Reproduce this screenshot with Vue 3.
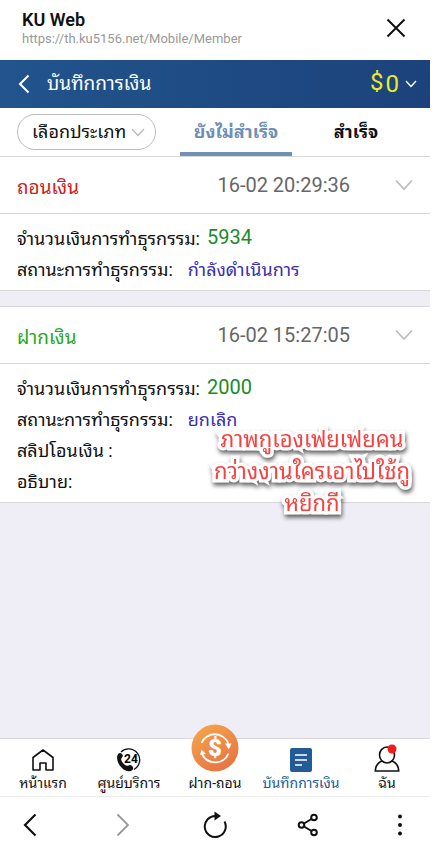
<script setup>
import { ref } from 'vue'

const type = ref('all')
const tab = ref('pending')

const records = [
  {
    id: 1,
    kind: 'withdraw',
    title: 'ถอนเงิน',
    time: '16-02 20:29:36',
    rows: [
      { label: 'จำนวนเงินการทำธุรกรรม:', value: '5934', style: 'amount' },
      { label: 'สถานะการทำธุรกรรม:', value: 'กำลังดำเนินการ', style: 'status' },
    ],
  },
  {
    id: 2,
    kind: 'deposit',
    title: 'ฝากเงิน',
    time: '16-02 15:27:05',
    rows: [
      { label: 'จำนวนเงินการทำธุรกรรม:', value: '2000', style: 'amount' },
      { label: 'สถานะการทำธุรกรรม:', value: 'ยกเลิก', style: 'status' },
      { label: 'สลิปโอนเงิน :', value: '', style: 'plain' },
      { label: 'อธิบาย:', value: '', style: 'plain' },
    ],
    note: ['ภาพกูเองเฟยเฟยคน', 'กว่างงานใครเอาไปใช้กู', 'หยิกกี'],
  },
]
</script>

<template>
  <div class="page">
    <header class="webbar">
      <div class="site">
        <h1 class="site-name">KU Web</h1>
        <p class="site-url">https://th.ku5156.net/Mobile/Member</p>
      </div>
      <button class="icon-btn" type="button" aria-label="ปิด">
        <svg width="20" height="20" viewBox="0 0 20 20" fill="none" stroke="#111" stroke-width="2">
          <path d="M1.5 1.5L18.5 18.5M18.5 1.5L1.5 18.5" />
        </svg>
      </button>
    </header>

    <div class="titlebar">
      <button class="icon-btn" type="button" aria-label="ย้อนกลับ">
        <svg width="12" height="20" viewBox="0 0 12 20" fill="none" stroke="#fff" stroke-width="2">
          <path d="M10.5 1.5L2 10L10.5 18.5" />
        </svg>
      </button>
      <h2 class="title">บันทึกการเงิน</h2>
      <button class="balance" type="button">
        <span class="currency">$</span>
        <span class="sum">0</span>
        <svg width="12" height="8" viewBox="0 0 12 8" fill="none" stroke="#fff" stroke-width="1.4">
          <path d="M1 1L6 6.5L11 1" />
        </svg>
      </button>
    </div>

    <div class="filters">
      <label class="picker">
        <select v-model="type" class="picker-select" aria-label="เลือกประเภท">
          <option value="all">เลือกประเภท</option>
        </select>
        <svg class="picker-arrow" width="14" height="9" viewBox="0 0 14 9" fill="none" stroke="#bbb" stroke-width="1.3">
          <path d="M1 1L7 7.5L13 1" />
        </svg>
      </label>
      <button class="tab" :class="{ active: tab === 'pending' }" type="button" @click="tab = 'pending'">ยังไม่สำเร็จ</button>
      <button class="tab" :class="{ active: tab === 'done' }" type="button" @click="tab = 'done'">สำเร็จ</button>
    </div>

    <main class="list">
      <article v-for="item in records" :key="item.id" class="card">
        <div class="card-head">
          <h3 class="card-title" :class="item.kind">{{ item.title }}</h3>
          <time class="card-time">{{ item.time }}</time>
          <button class="icon-btn" type="button" aria-label="รายละเอียด">
            <svg width="18" height="12" viewBox="0 0 18 12" fill="none" stroke="#bdbdbd" stroke-width="1.8">
              <path d="M1 1.5L9 10L17 1.5" />
            </svg>
          </button>
        </div>
        <dl class="card-body">
          <div v-for="row in item.rows" :key="row.label" class="row" :class="row.style">
            <dt>{{ row.label }}</dt>
            <dd>{{ row.value }}</dd>
          </div>
        </dl>
        <p v-if="item.note" class="note">
          <span v-for="line in item.note" :key="line">{{ line }}</span>
        </p>
      </article>
    </main>

    <nav class="appnav">
      <a class="nav-item" href="#home">
        <svg width="24" height="24" viewBox="0 0 24 24" fill="none" stroke="#111" stroke-width="1.6">
          <path d="M2 22V9.500L12 2L22 9.500V22H15V15H9V22Z" stroke-linejoin="round" />
        </svg>
        <span>หน้าแรก</span>
      </a>
      <a class="nav-item" href="#service">
        <svg width="26" height="24" viewBox="0 0 26 24">
          <path d="M5 4A11 11 0 1 1 18 21.500" fill="none" stroke="#111" stroke-width="1.3" />
          <path d="M2.500 5.500C4 4 6.500 5.500 6.800 7.500C7 9.500 5 9.500 5.200 11.500C5.500 14 8.500 17.200 10.800 17.800C12.600 18 13 16.500 14.800 17.200C17 18.200 18 20.500 16.500 22C14 24.200 9 23.500 5.500 19.500C1.500 15.500 -0.500 9 2.500 5.500Z" fill="#111" />
          <text x="15" y="15" text-anchor="middle" class="service-text">24</text>
        </svg>
        <span>ศูนย์บริการ</span>
      </a>
      <a class="nav-item" href="#cash">
        <svg class="coin" width="48" height="48" viewBox="0 0 48 48">
          <defs>
            <linearGradient id="coinFill" x1="0" y1="0" x2="0.600" y2="1">
              <stop offset="0" stop-color="#f5a94c" />
              <stop offset="1" stop-color="#e87543" />
            </linearGradient>
          </defs>
          <circle cx="24" cy="24" r="23.500" fill="url(#coinFill)" />
          <g fill="none" stroke="#fff" stroke-width="1.800">
            <path d="M10.500 19A14.500 14.500 0 0 1 37.500 20" />
            <path d="M37.500 29.500A14.500 14.500 0 0 1 11 30" />
          </g>
          <path d="M34 19.500H40.500L37.800 25.500ZM9 31L10.500 25.500L15 30Z" fill="#fff" />
          <text x="24" y="32" text-anchor="middle" class="coin-text">$</text>
        </svg>
        <span>ฝาก-ถอน</span>
      </a>
      <a class="nav-item current" href="#records">
        <svg width="24" height="24" viewBox="0 0 24 24">
          <rect x="1" width="22" height="24" rx="2" fill="#235b94" />
          <path d="M6 7H18M6 12H18M6 17H13" stroke="#fff" stroke-width="1.400" />
        </svg>
        <span>บันทึกการเงิน</span>
      </a>
      <a class="nav-item" href="#me">
        <svg class="person" width="26" height="28" viewBox="0 0 26 28">
          <g fill="none" stroke="#111" stroke-width="1.600">
            <ellipse cx="13" cy="11" rx="7.500" ry="8" />
            <path d="M8 17C4 18.500 1.500 22 1.300 27H24.700C24.500 22 22 18.500 18 17" />
          </g>
          <circle cx="18" cy="5" r="4.500" fill="#ee1c1c" />
        </svg>
        <span>ฉัน</span>
      </a>
    </nav>

    <footer class="toolbar">
      <button class="icon-btn" type="button" aria-label="ก่อนหน้า">
        <svg width="14" height="24" viewBox="0 0 14 24" fill="none" stroke="#111" stroke-width="2.200">
          <path d="M12.500 1.500L2 12L12.500 22.500" />
        </svg>
      </button>
      <button class="icon-btn" type="button" aria-label="ถัดไป">
        <svg width="14" height="24" viewBox="0 0 14 24" fill="none" stroke="#999" stroke-width="1.800">
          <path d="M1.500 1.500L12 12L1.500 22.500" />
        </svg>
      </button>
      <button class="icon-btn" type="button" aria-label="โหลดใหม่">
        <svg width="26" height="28" viewBox="0 0 26 28">
          <path d="M14 5A10.500 10.500 0 1 0 22.500 10.500" fill="none" stroke="#111" stroke-width="2" />
          <path d="M12.500 0.500L19 5L12.500 9.500Z" fill="#111" />
        </svg>
      </button>
      <button class="icon-btn" type="button" aria-label="แชร์">
        <svg width="22" height="24" viewBox="0 0 22 24" fill="none" stroke="#111" stroke-width="2">
          <circle cx="4.500" cy="12" r="2.800" />
          <circle cx="17" cy="4.500" r="2.800" />
          <circle cx="17" cy="19.500" r="2.800" />
          <path d="M7 10.500L14.500 6M7 13.500L14.500 18" />
        </svg>
      </button>
      <button class="icon-btn" type="button" aria-label="เมนู">
        <svg width="6" height="24" viewBox="0 0 6 24" fill="#111">
          <circle cx="3" cy="3.500" r="2" />
          <circle cx="3" cy="12" r="2" />
          <circle cx="3" cy="20.500" r="2" />
        </svg>
      </button>
    </footer>
  </div>
</template>

<style>
body {
  background: #fff;
}
</style>

<style scoped>
.page {
  display: flex;
  flex-direction: column;
  min-height: 100vh;
  box-sizing: border-box;
  padding: 0 8px 8px 0;
  font-family: Roboto, "Noto Sans Thai Looped", "Noto Looped Thai", Loma, Waree, Garuda, "Droid Sans Thai", "Noto Sans Thai", sans-serif;
  color: #111;
}

h1, h2, h3, p, dl, dd {
  margin: 0;
}

button {
  padding: 0;
  border: 0;
  background: none;
  color: inherit;
  font-family: inherit;
}

svg {
  display: block;
  flex: none;
}

.webbar {
  display: flex;
  align-items: center;
  justify-content: space-between;
  height: 60px;
  box-sizing: border-box;
  padding: 0 24px 4px 22px;
}

.site-name {
  font-size: 18px;
  line-height: 22px;
  font-weight: 600;
}

.site-url {
  font-size: 13px;
  line-height: 16px;
  color: #999;
}

.titlebar {
  display: flex;
  align-items: center;
  height: 48px;
  padding: 0 13px 0 18px;
  background: linear-gradient(90deg, #22548d, #1c427b);
  color: #fff;
}

.title {
  flex: 1;
  padding-left: 17px;
  font-size: 19px;
  line-height: 24px;
  font-weight: 400;
}

.balance {
  display: flex;
  align-items: center;
  gap: 2px;
  color: #ebe92a;
  font-size: 24px;
  line-height: 28px;
}

.currency {
  padding-bottom: 4px;
}

.balance svg {
  margin-left: 4px;
}

.filters {
  display: flex;
  align-items: stretch;
  height: 48px;
  padding-left: 17px;
  border-bottom: 1px solid #d8d8d8;
}

.picker {
  position: relative;
  align-self: center;
  width: 139px;
  margin-right: 24px;
}

.picker-select {
  width: 100%;
  height: 36px;
  padding: 0 24px 2px 14px;
  border: 1px solid #bbb;
  border-radius: 18px;
  appearance: none;
  background: #fff;
  color: #111;
  font-family: inherit;
  font-size: 18px;
}

.picker-arrow {
  position: absolute;
  right: 11px;
  top: 14px;
  pointer-events: none;
}

.tab {
  flex: 0 1 112px;
  margin-right: 8px;
  border-bottom: 4px solid transparent;
  font-size: 18px;
  font-weight: 700;
}

.tab.active {
  border-color: #6f8fb3;
  color: #6f8fb3;
}

.list {
  flex: 1;
  background: #efeef6;
}

.card {
  position: relative;
  margin-bottom: 15px;
  border-bottom: 1px solid #d8d8d8;
  background: #fff;
}

.card + .card {
  border-top: 1px solid #d8d8d8;
}

.card-head {
  display: flex;
  align-items: center;
  height: 56px;
  padding: 0 17px;
  border-bottom: 1px solid #d8d8d8;
}

.card-title {
  flex: 1;
  font-size: 19px;
  font-weight: 400;
}

.card-title.withdraw {
  color: #d0211c;
}

.card-title.deposit {
  color: #27a822;
}

.card-time {
  margin-right: 45px;
  font-size: 20px;
  color: #666;
}

.card-body {
  padding: 7px 17px;
}

.row {
  display: flex;
  align-items: center;
  height: 31px;
  font-size: 18px;
}

.amount dd {
  margin-left: 7px;
  font-size: 20px;
  color: #1c8a27;
}

.status dd {
  margin-left: 15px;
  color: #3a2fb4;
}

.note {
  position: absolute;
  right: 20px;
  bottom: -18px;
  color: #f9403f;
  font-size: 22px;
  line-height: 32px;
  text-align: center;
  white-space: nowrap;
  -webkit-text-stroke: 7px #fff;
  paint-order: stroke fill;
  stroke-linejoin: round;
  filter: drop-shadow(1px 3px 2px rgba(0, 0, 0, 0.6));
}

.note span {
  display: block;
}

.appnav {
  display: grid;
  grid-template-columns: repeat(5, 1fr);
  grid-template-rows: 100%;
  height: 57px;
  border-top: 1px solid #d8d8d8;
  border-bottom: 1px solid #ececec;
}

.nav-item {
  display: flex;
  flex-direction: column;
  align-items: center;
  justify-content: flex-end;
  gap: 2px;
  min-width: 0;
  padding-bottom: 4px;
  color: #111;
  font-size: 14px;
  line-height: 18px;
  text-decoration: none;
  white-space: nowrap;
}

.nav-item.current {
  color: #235b94;
}

.coin {
  margin-top: -20px;
}

.service-text {
  font-size: 12px;
  font-weight: 700;
}

.coin-text {
  fill: #fff;
  font-size: 24px;
  font-weight: 900;
}

.toolbar {
  display: flex;
  align-items: center;
  justify-content: space-between;
  height: 56px;
  padding: 0 17px;
}

.toolbar .icon-btn {
  display: flex;
  justify-content: center;
  width: 26px;
}
</style>
